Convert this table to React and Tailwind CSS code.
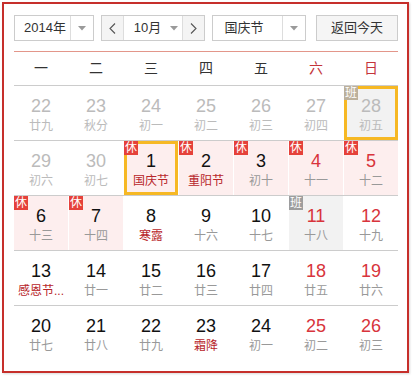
import React from "react";
import clsx from "clsx";

const weekdays = ["一", "二", "三", "四", "五", "六", "日"];

// o = 上月, b = 休/班 角标, s = 选中框, r = 农历红字
const rows = [
  [
    { d: 22, l: "廿九", o: 1 },
    { d: 23, l: "秋分", o: 1 },
    { d: 24, l: "初一", o: 1 },
    { d: 25, l: "初二", o: 1 },
    { d: 26, l: "初三", o: 1 },
    { d: 27, l: "初四", o: 1 },
    { d: 28, l: "初五", o: 1, b: "班", s: 1 },
  ],
  [
    { d: 29, l: "初六", o: 1 },
    { d: 30, l: "初七", o: 1 },
    { d: 1, l: "国庆节", b: "休", s: 1, r: 1 },
    { d: 2, l: "重阳节", b: "休", r: 1 },
    { d: 3, l: "初十", b: "休" },
    { d: 4, l: "十一", b: "休" },
    { d: 5, l: "十二", b: "休" },
  ],
  [
    { d: 6, l: "十三", b: "休" },
    { d: 7, l: "十四", b: "休" },
    { d: 8, l: "寒露", r: 1 },
    { d: 9, l: "十六" },
    { d: 10, l: "十七" },
    { d: 11, l: "十八", b: "班" },
    { d: 12, l: "十九" },
  ],
  [
    { d: 13, l: "感恩节...", r: 1 },
    { d: 14, l: "廿一" },
    { d: 15, l: "廿二" },
    { d: 16, l: "廿三" },
    { d: 17, l: "廿四" },
    { d: 18, l: "廿五" },
    { d: 19, l: "廿六" },
  ],
  [
    { d: 20, l: "廿七" },
    { d: 21, l: "廿八" },
    { d: 22, l: "廿九" },
    { d: 23, l: "霜降", r: 1 },
    { d: 24, l: "初一" },
    { d: 25, l: "初二" },
    { d: 26, l: "初三" },
  ],
];

const Caret = () => (
  <svg width="8" height="5" viewBox="0 0 8 5">
    <polygon points="0,0 8,0 4,4.5" fill="#9a9a9a" />
  </svg>
);

const Chevron = ({ dir }) => (
  <svg width="7" height="11" viewBox="0 0 7 11">
    <polyline
      points={dir === "left" ? "6,0.5 1,5.5 6,10.5" : "1,0.5 6,5.5 1,10.5"}
      fill="none"
      stroke="#555"
      strokeWidth="1.1"
    />
  </svg>
);

const Cell = ({ c, col }) => {
  const weekend = col >= 5;
  let bg = "";
  if (c.b === "休") bg = "bg-[#fdeeee]";
  else if (c.b === "班") bg = "bg-[#f2f2f2]";

  let numColor = "text-[#111]";
  if (c.o) numColor = "text-[#bbbbbb]";
  else if (weekend) numColor = "text-[#d8343c]";

  let lunarColor = "text-[#999]";
  if (c.o) lunarColor = "text-[#bbbbbb]";
  else if (c.r) lunarColor = "text-[#b8262b]";

  return (
    <div
      className={clsx(
        "relative h-[54px] flex flex-col items-center pt-[9px]",
        bg,
        c.s && "shadow-[inset_0_0_0_3px_#f6b824]"
      )}
    >
      {c.b && (
        <span
          className={clsx(
            "absolute top-0 left-0 w-[14px] h-[14px] text-[12px] leading-[14px] text-white text-center",
            c.b === "休" ? "bg-[#e5413a]" : c.o ? "bg-[#bcb09b]" : "bg-[#9d9d9d]"
          )}
        >
          {c.b}
        </span>
      )}
      <div className={clsx("text-[18px] leading-[22px]", numColor)}>{c.d}</div>
      <div className={clsx("text-[12px] leading-[16px] mt-[1px]", lunarColor)}>{c.l}</div>
    </div>
  );
};

export default function App() {
  return (
    <div className="w-[413px] h-[376px] bg-white pt-[2px] pl-[2px] font-['Liberation_Sans','Noto_Sans_CJK_SC',sans-serif]">
      <div className="w-[407px] border-2 border-[#c62f2b] pl-[10px] pr-[9px] pt-[11px] pb-[11px] shadow-[1px_1px_2px_rgba(0,0,0,0.15)]">
        {/* 顶部控制栏 */}
        <div className="flex h-[26px] text-[13px] text-[#333]">
          <div className="flex w-[80px] border border-[#ccc] bg-white">
            <div className="w-[55px] pl-[9px] flex items-center">2014年</div>
            <div className="flex-1 border-l border-[#ddd] flex items-center justify-center">
              <Caret />
            </div>
          </div>

          <div className="flex w-[105px] ml-[7px] border border-[#ccc] bg-white">
            <div className="w-[22px] bg-[#f4f4f4] border-r border-[#ddd] flex items-center justify-center">
              <Chevron dir="left" />
            </div>
            <div className="flex-1 flex items-center pl-[10px] gap-[9px]">
              <span>10月</span>
              <Caret />
            </div>
            <div className="w-[22px] bg-[#f4f4f4] border-l border-[#ddd] flex items-center justify-center">
              <Chevron dir="right" />
            </div>
          </div>

          <div className="flex w-[94px] ml-[7px] border border-[#ccc] bg-white">
            <div className="w-[69px] pl-[11px] flex items-center">国庆节</div>
            <div className="flex-1 border-l border-[#ddd] flex items-center justify-center">
              <Caret />
            </div>
          </div>

          <button className="w-[82px] ml-[10px] border border-[#ccc] bg-[#f5f5f5] text-[#333] flex items-center justify-center">
            返回今天
          </button>
        </div>

        <div className="mt-[10px] border-t border-[#e3968a]" />

        {/* 星期 */}
        <div className="grid grid-cols-[repeat(7,54px)] gap-x-px h-[34px] border-b border-[#ccc] items-center text-[14px]">
          {weekdays.map((w, i) => (
            <div key={w} className={clsx("text-center", i >= 5 ? "text-[#c4343a]" : "text-[#333]")}>
              {w}
            </div>
          ))}
        </div>

        {/* 日期 */}
        {rows.map((row, ri) => (
          <div
            key={ri}
            className={clsx(
              "grid grid-cols-[repeat(7,54px)] gap-x-px",
              ri < rows.length - 1 && "border-b border-[#ccc]"
            )}
          >
            {row.map((c, ci) => (
              <Cell key={ci} c={c} col={ci} />
            ))}
          </div>
        ))}
      </div>
    </div>
  );
}
